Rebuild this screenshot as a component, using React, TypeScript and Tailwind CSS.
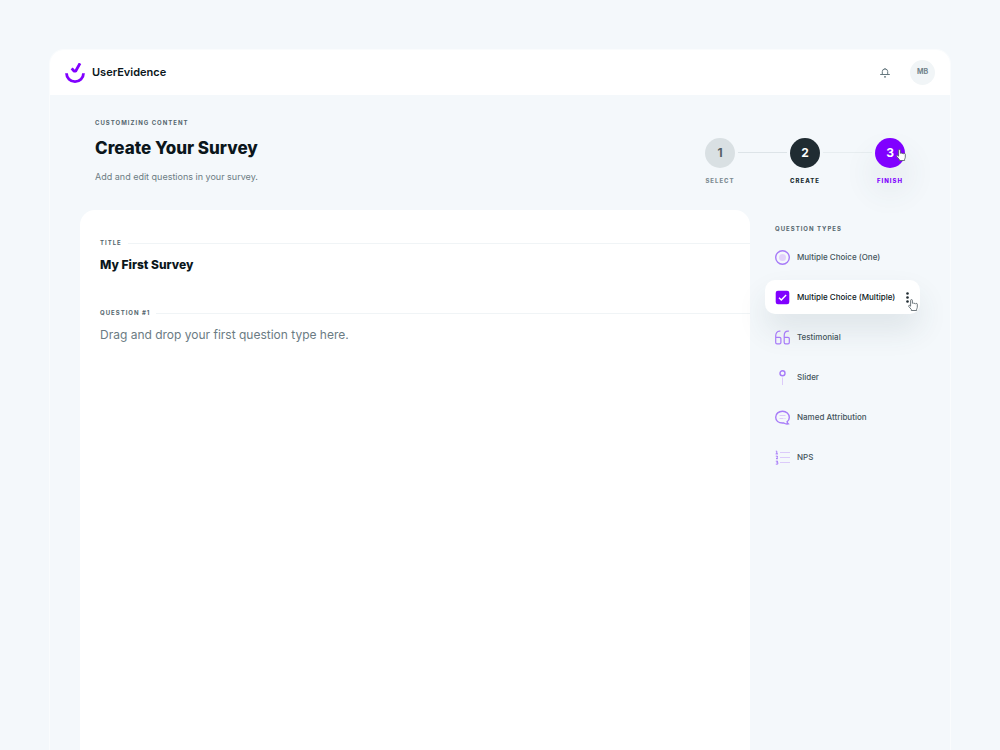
import type { ReactNode } from "react";
import clsx from "clsx";

function Logo() {
  return (
    <svg className="size-5" viewBox="0 0 20 20" fill="none" stroke="#8000ff" aria-hidden="true">
      <path d="M1.500 10.300a8.500 8.300 0 0 0 17 0" strokeWidth="2.800" />
      <path d="M6.700 5.400l2.500 2.800h1.400L15 0.300" strokeWidth="2.800" strokeLinejoin="bevel" />
    </svg>
  );
}

function BellIcon() {
  return (
    <svg className="size-[10px]" viewBox="0 0 10 10" fill="none" stroke="#65777e" strokeWidth="1" aria-hidden="true">
      <path d="M5 0v1M2.300 6.500V3.500a2.700 2.500 0 0 1 5.400 0v3M0.200 6.500h9.600" />
      <path d="M4 8.900h2" strokeWidth="1.200" />
    </svg>
  );
}

function HandCursor({ className }: { className?: string }) {
  return (
    <svg className={clsx("pointer-events-none absolute h-3 w-[10px]", className)} viewBox="0 0 10 12" aria-hidden="true">
      <path
        d="M2.6 7.2V1.5a.9.9 0 0 1 1.8 0v2.800l.3-.1a.9.9 0 0 1 1.3.4 1 1 0 0 1 1.500.3 1 1 0 0 1 1.800.9v2.500c0 .7-.5 1.400-.7 1.900v1.300H3.300v-1.100L.8 7.600C.2 6.700 1.100 6 1.800 6.500z"
        fill="#fff"
        stroke="#4c585e"
        strokeWidth=".8"
        strokeLinejoin="round"
      />
    </svg>
  );
}

function TypeIcon({ children }: { children: ReactNode }) {
  return (
    <svg className="size-[15px] shrink-0" viewBox="0 0 15 15" fill="none" stroke="#a77bf8" strokeWidth="1.2" aria-hidden="true">
      {children}
    </svg>
  );
}

const questionTypes: { name: string; selected?: boolean; icon: ReactNode }[] = [
  {
    name: "Multiple Choice (One)",
    icon: (
      <>
        <circle cx="7.5" cy="7.5" r="6.8" strokeWidth="1.4" />
        <circle cx="7.5" cy="7.5" r="3.5" fill="#e2d2fb" stroke="none" />
      </>
    ),
  },
  {
    name: "Multiple Choice (Multiple)",
    selected: true,
    icon: (
      <>
        <rect x=".7" y=".7" width="13.6" height="13.6" rx="2.2" fill="#8000ff" stroke="none" />
        <path d="M4 7.8l2.3 2.2 4.8-5" stroke="#fff" strokeWidth="1.4" />
      </>
    ),
  },
  {
    name: "Testimonial",
    icon: (
      <>
        <path d="M5.4 1.2H4.5C2 1.2.7 3.2.7 6v6.5c0 .8.5 1.3 1.3 1.3h2.6c.8 0 1.3-.5 1.3-1.3V8.6c0-.8-.5-1.3-1.3-1.3H.9" />
        <path d="M13.9 1.2H13c-2.5 0-3.8 2-3.8 4.8v6.5c0 .8.5 1.3 1.3 1.3h2.5c.8 0 1.3-.5 1.3-1.3V8.6c0-.8-.5-1.3-1.3-1.3H9.4" />
      </>
    ),
  },
  {
    name: "Slider",
    icon: (
      <>
        <circle cx="7.5" cy="3.2" r="2.5" strokeWidth="1.4" />
        <path d="M7.5 7.5V15" stroke="#dccbfa" strokeWidth="1" />
      </>
    ),
  },
  {
    name: "Named Attribution",
    icon: (
      <>
        <path
          d="M12.1 11.6c1.400-1 2.200-2.500 2.200-4.200C14.300 3.700 11.300 1.200 7.500 1.200S.7 3.700 .7 7.200s3 5.800 6.800 5.800h1.300c1.300.9 2.800 1.200 4.400.9-.7-.6-1.100-1.300-1.100-2.300z"
          strokeWidth="1.4"
        />
        <path d="M4.500 5.500h6M4.500 8.500h4M9.500 8.500h1" stroke="#dccbfa" strokeWidth="1" />
      </>
    ),
  },
  {
    name: "NPS",
    icon: (
      <>
        <path d="M5 2.500h10M5 7.500h10M5 12.500h10" stroke="#dccbfa" strokeWidth="1" />
        <path d="M.8 1.200h1v2.700M.6 3.900h2.400M.8 6.200h1.700v1.200L1 8.700h2M.8 11.200h2l-1 1.200h1v1.700h-2" strokeWidth="1" />
      </>
    ),
  },
];

const steps = [
  { n: 1, name: "Select", circle: "bg-[#d9e0e3] text-[#556066]", label: "text-[#7d8c92]", line: "bg-[#dde4e8]" },
  { n: 2, name: "Create", circle: "bg-[#202c32] text-white", label: "text-[#202c32]", line: "bg-[#e7edf0]" },
  { n: 3, name: "Finish", circle: "bg-[#8000ff] text-white shadow-[0_20px_30px_6px_rgba(60,80,95,0.07)]", label: "text-[#8000ff]", line: "" },
];

const eyebrow = "text-[6px] font-bold uppercase leading-[10px] tracking-[1px] text-[#54666e]";

function FieldHeading({ children, htmlFor }: { children: ReactNode; htmlFor?: string }) {
  return (
    <div className="flex items-center gap-[6px]">
      {htmlFor ? <label htmlFor={htmlFor} className={eyebrow}>{children}</label> : <h2 className={eyebrow}>{children}</h2>}
      <span className="h-px flex-1 bg-[#f0f4f6]" />
    </div>
  );
}

export default function App() {
  return (
    <div className="flex min-h-screen flex-col bg-[#f4f8fb] px-[50px] pt-[50px] font-['Inter',sans-serif] text-[#0b161b]">
      <div className="flex flex-1 flex-col rounded-t-[14px] shadow-[0_0_0_1px_#fafcfd]">
        <header className="flex h-[45px] items-center rounded-t-[14px] bg-white px-[15px]">
          <a href="#" className="flex items-center gap-[7px] text-[11px] font-semibold">
            <Logo />
            UserEvidence
          </a>
          <button aria-label="Notifications" className="ml-auto mr-5">
            <BellIcon />
          </button>
          <button className="size-[25px] rounded-full bg-[#f1f5f7] text-[7px] font-bold text-[#72828a]">MB</button>
        </header>

        <main className="flex flex-1 flex-col px-[30px] pt-[23px]">
          <div className="flex justify-between px-[15px]">
            <div>
              <p className={eyebrow}>Customizing Content</p>
              <h1 className="mt-2 text-[17px] font-extrabold leading-6">Create Your Survey</h1>
              <p className="mt-[10px] text-[9px] leading-[14px] text-[#6c7c83]">Add and edit questions in your survey.</p>
            </div>
            <ol className="flex pt-5">
              {steps.map((s) => (
                <li key={s.n} className="flex">
                  <a href="#" className="flex w-[30px] flex-col items-center">
                    <span className={clsx("relative flex size-[30px] items-center justify-center rounded-full text-[12px] font-bold", s.circle)}>
                      {s.n}
                      {s.n === 3 && <HandCursor className="left-[21px] top-[11px]" />}
                    </span>
                    <span className={clsx("relative mt-2 text-[6px] font-extrabold uppercase leading-[10px] tracking-[1px]", s.label)}>{s.name}</span>
                  </a>
                  {s.line && <span className={clsx("mx-[3px] mt-[14px] h-px w-[49px]", s.line)} />}
                </li>
              ))}
            </ol>
          </div>

          <div className="mt-6 grid flex-1 grid-cols-[1fr_155px] gap-[15px]">
            <section className="rounded-t-[15px] bg-white pl-5 pt-[28px]">
              <FieldHeading htmlFor="survey-title">Title</FieldHeading>
              <input
                id="survey-title"
                defaultValue="My First Survey"
                className="mt-[9px] block h-4 w-full text-[12px] font-extrabold outline-none"
              />
              <div className="mt-[35px]">
                <FieldHeading>Question #1</FieldHeading>
              </div>
              <p className="mt-[7px] text-[12px] leading-5 text-[#6b7b83]">Drag and drop your first question type here.</p>
            </section>

            <aside className="pt-[14px]">
              <h2 className={clsx("pl-[10px]", eyebrow)}>Question Types</h2>
              <ul className="mt-[6px] flex flex-col gap-[6px]">
                {questionTypes.map((q) => (
                  <li
                    key={q.name}
                    className={clsx(
                      "flex h-[34px] items-center rounded-[10px] pl-[10px]",
                      q.selected ? "bg-white text-[#0b161b] shadow-[0_16px_30px_rgba(50,70,85,0.11)]" : "relative text-[#44545b]",
                    )}
                  >
                    <button className="flex items-center gap-[7px] whitespace-nowrap text-[8px] font-medium">
                      <TypeIcon>{q.icon}</TypeIcon>
                      {q.name}
                    </button>
                    {q.selected && (
                      <button aria-label="More options" className="relative ml-auto mr-[11px]">
                        <svg className="h-[11px] w-[3px]" viewBox="0 0 3 11" fill="#202c32" aria-hidden="true">
                          <circle cx="1.500" cy="1.500" r="1.300" />
                          <circle cx="1.500" cy="5.500" r="1.300" />
                          <circle cx="1.500" cy="9.500" r="1.300" />
                        </svg>
                        <HandCursor className="left-[2px] top-[7px]" />
                      </button>
                    )}
                  </li>
                ))}
              </ul>
            </aside>
          </div>
        </main>
      </div>
    </div>
  );
}
